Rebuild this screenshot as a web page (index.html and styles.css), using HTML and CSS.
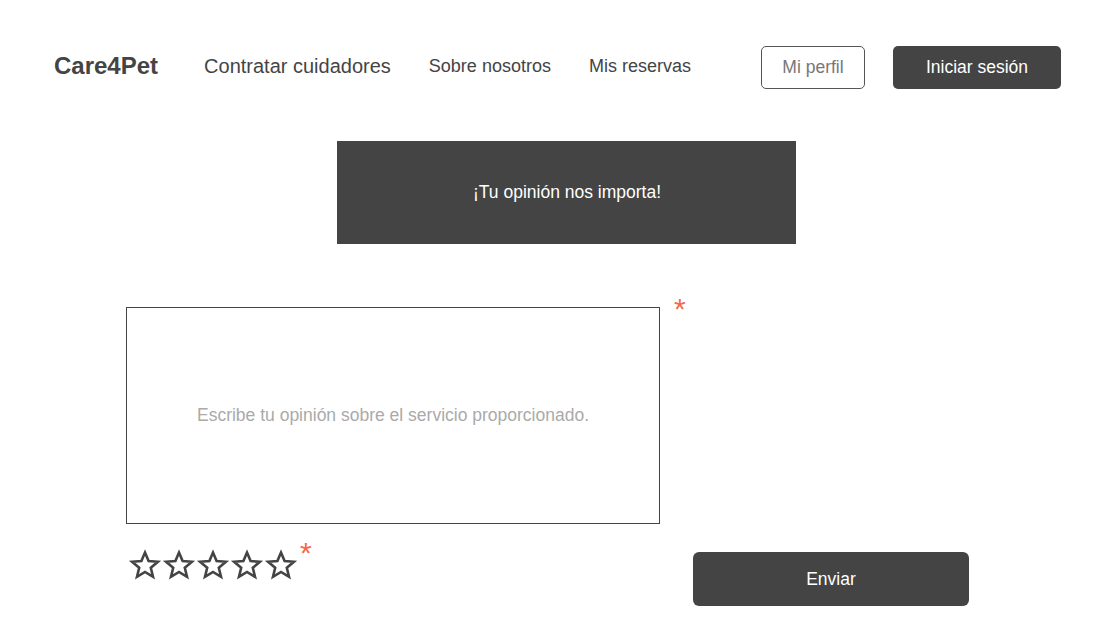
FILE: index.html
```html
<!DOCTYPE html>
<html lang="es">
<head>
<meta charset="utf-8">
<title>Care4Pet - Opinión</title>
<link rel="stylesheet" href="styles.css">
</head>
<body>
<header class="header">
  <div class="logo">Care4Pet</div>
  <nav class="nav">
    <a class="nav-main" href="#">Contratar cuidadores</a>
    <a class="nav-link" href="#">Sobre nosotros</a>
    <a class="nav-link" href="#">Mis reservas</a>
  </nav>
  <div class="actions">
    <button class="btn-outline">Mi perfil</button>
    <button class="btn-dark">Iniciar sesión</button>
  </div>
</header>
<main class="main">
  <div class="banner">¡Tu opinión nos importa!</div>
  <div class="form">
    <div class="textbox">Escribe tu opinión sobre el servicio proporcionado.</div>
    <div class="req req-top">*</div>
    <div class="rating">
      <div class="stars">
        <svg class="star" viewBox="0 0 34 34"><path d="M17 4.5 L20.6 13.1 L29.9 13.8 L22.8 19.8 L25 28.8 L17 23.9 L9 28.8 L11.2 19.8 L4.1 13.8 L13.4 13.1 Z"/></svg>
        <svg class="star" viewBox="0 0 34 34"><path d="M17 4.5 L20.6 13.1 L29.9 13.8 L22.8 19.8 L25 28.8 L17 23.9 L9 28.8 L11.2 19.8 L4.1 13.8 L13.4 13.1 Z"/></svg>
        <svg class="star" viewBox="0 0 34 34"><path d="M17 4.5 L20.6 13.1 L29.9 13.8 L22.8 19.8 L25 28.8 L17 23.9 L9 28.8 L11.2 19.8 L4.1 13.8 L13.4 13.1 Z"/></svg>
        <svg class="star" viewBox="0 0 34 34"><path d="M17 4.5 L20.6 13.1 L29.9 13.8 L22.8 19.8 L25 28.8 L17 23.9 L9 28.8 L11.2 19.8 L4.1 13.8 L13.4 13.1 Z"/></svg>
        <svg class="star" viewBox="0 0 34 34"><path d="M17 4.5 L20.6 13.1 L29.9 13.8 L22.8 19.8 L25 28.8 L17 23.9 L9 28.8 L11.2 19.8 L4.1 13.8 L13.4 13.1 Z"/></svg>
      </div>
      <span class="req req-stars">*</span>
    </div>
    <div class="submit-cell">
      <button class="btn-send">Enviar</button>
    </div>
  </div>
</main>
</body>
</html>
```

FILE: styles.css
```css
* { box-sizing: border-box; }
html, body { margin: 0; padding: 0; background: #fff; }
body {
  font-family: "Liberation Sans", Arial, sans-serif;
  color: #444;
  width: 1104px;
  height: 640px;
  overflow: hidden;
}
.header {
  display: flex;
  align-items: center;
  padding: 46px 43px 0 54px;
  height: 89px;
}
.logo {
  font-size: 24px;
  font-weight: bold;
  color: #444;
  line-height: 1;
  margin-top: -3px;
}
.nav {
  display: flex;
  align-items: center;
  margin-left: 46px;
  gap: 38px;
  margin-top: -4px;
}
.nav a { text-decoration: none; color: #444; line-height: 1; }
.nav-main { font-size: 20px; }
.nav-link { font-size: 18px; }
.actions {
  margin-left: auto;
  display: flex;
  gap: 28px;
}
button { font-family: inherit; cursor: pointer; }
.btn-outline {
  width: 104px;
  height: 43px;
  background: #fff;
  border: 1px solid #555;
  border-radius: 5px;
  color: #777;
  font-size: 17.5px;
  padding-bottom: 2px;
}
.btn-dark {
  width: 168px;
  height: 43px;
  background: #444;
  border: none;
  border-radius: 5px;
  color: #fff;
  font-size: 17.5px;
  padding-bottom: 2px;
}
.main { padding-top: 52px; }
.banner {
  margin-left: 337px;
  width: 459px;
  height: 103px;
  background: #444;
  color: #fff;
  font-size: 17.5px;
  display: flex;
  align-items: center;
  justify-content: center;
  padding-left: 1px;
}
.form {
  display: grid;
  grid-template-columns: 534px auto;
  margin: 55px 0 0 126px;
  row-gap: 17px;
}
.textbox {
  margin-top: 8px;
  width: 534px;
  height: 217px;
  border: 1px solid #444;
  display: flex;
  align-items: center;
  justify-content: center;
  color: #aaa;
  font-size: 17.5px;
  padding-bottom: 0;
}
.req {
  color: #f7694f;
  font-size: 30px;
  line-height: 1;
}
.req-top { padding-left: 14px; margin-top: -5px; }
.rating {
  display: flex;
  align-items: flex-start;
  margin-left: 2px;
}
.stars { display: flex; margin-top: 7px; }
.star {
  width: 34px;
  height: 34px;
  fill: none;
  stroke: #444;
  stroke-width: 2.6;
  stroke-linejoin: miter;
}
.req-stars { margin-left: 2px; margin-top: -3px; }
.submit-cell { padding-left: 33px; padding-top: 11px; }
.btn-send {
  width: 276px;
  height: 54px;
  background: #444;
  border: none;
  border-radius: 6px;
  color: #fff;
  font-size: 17.5px;
  padding-top: 2px;
}
```
